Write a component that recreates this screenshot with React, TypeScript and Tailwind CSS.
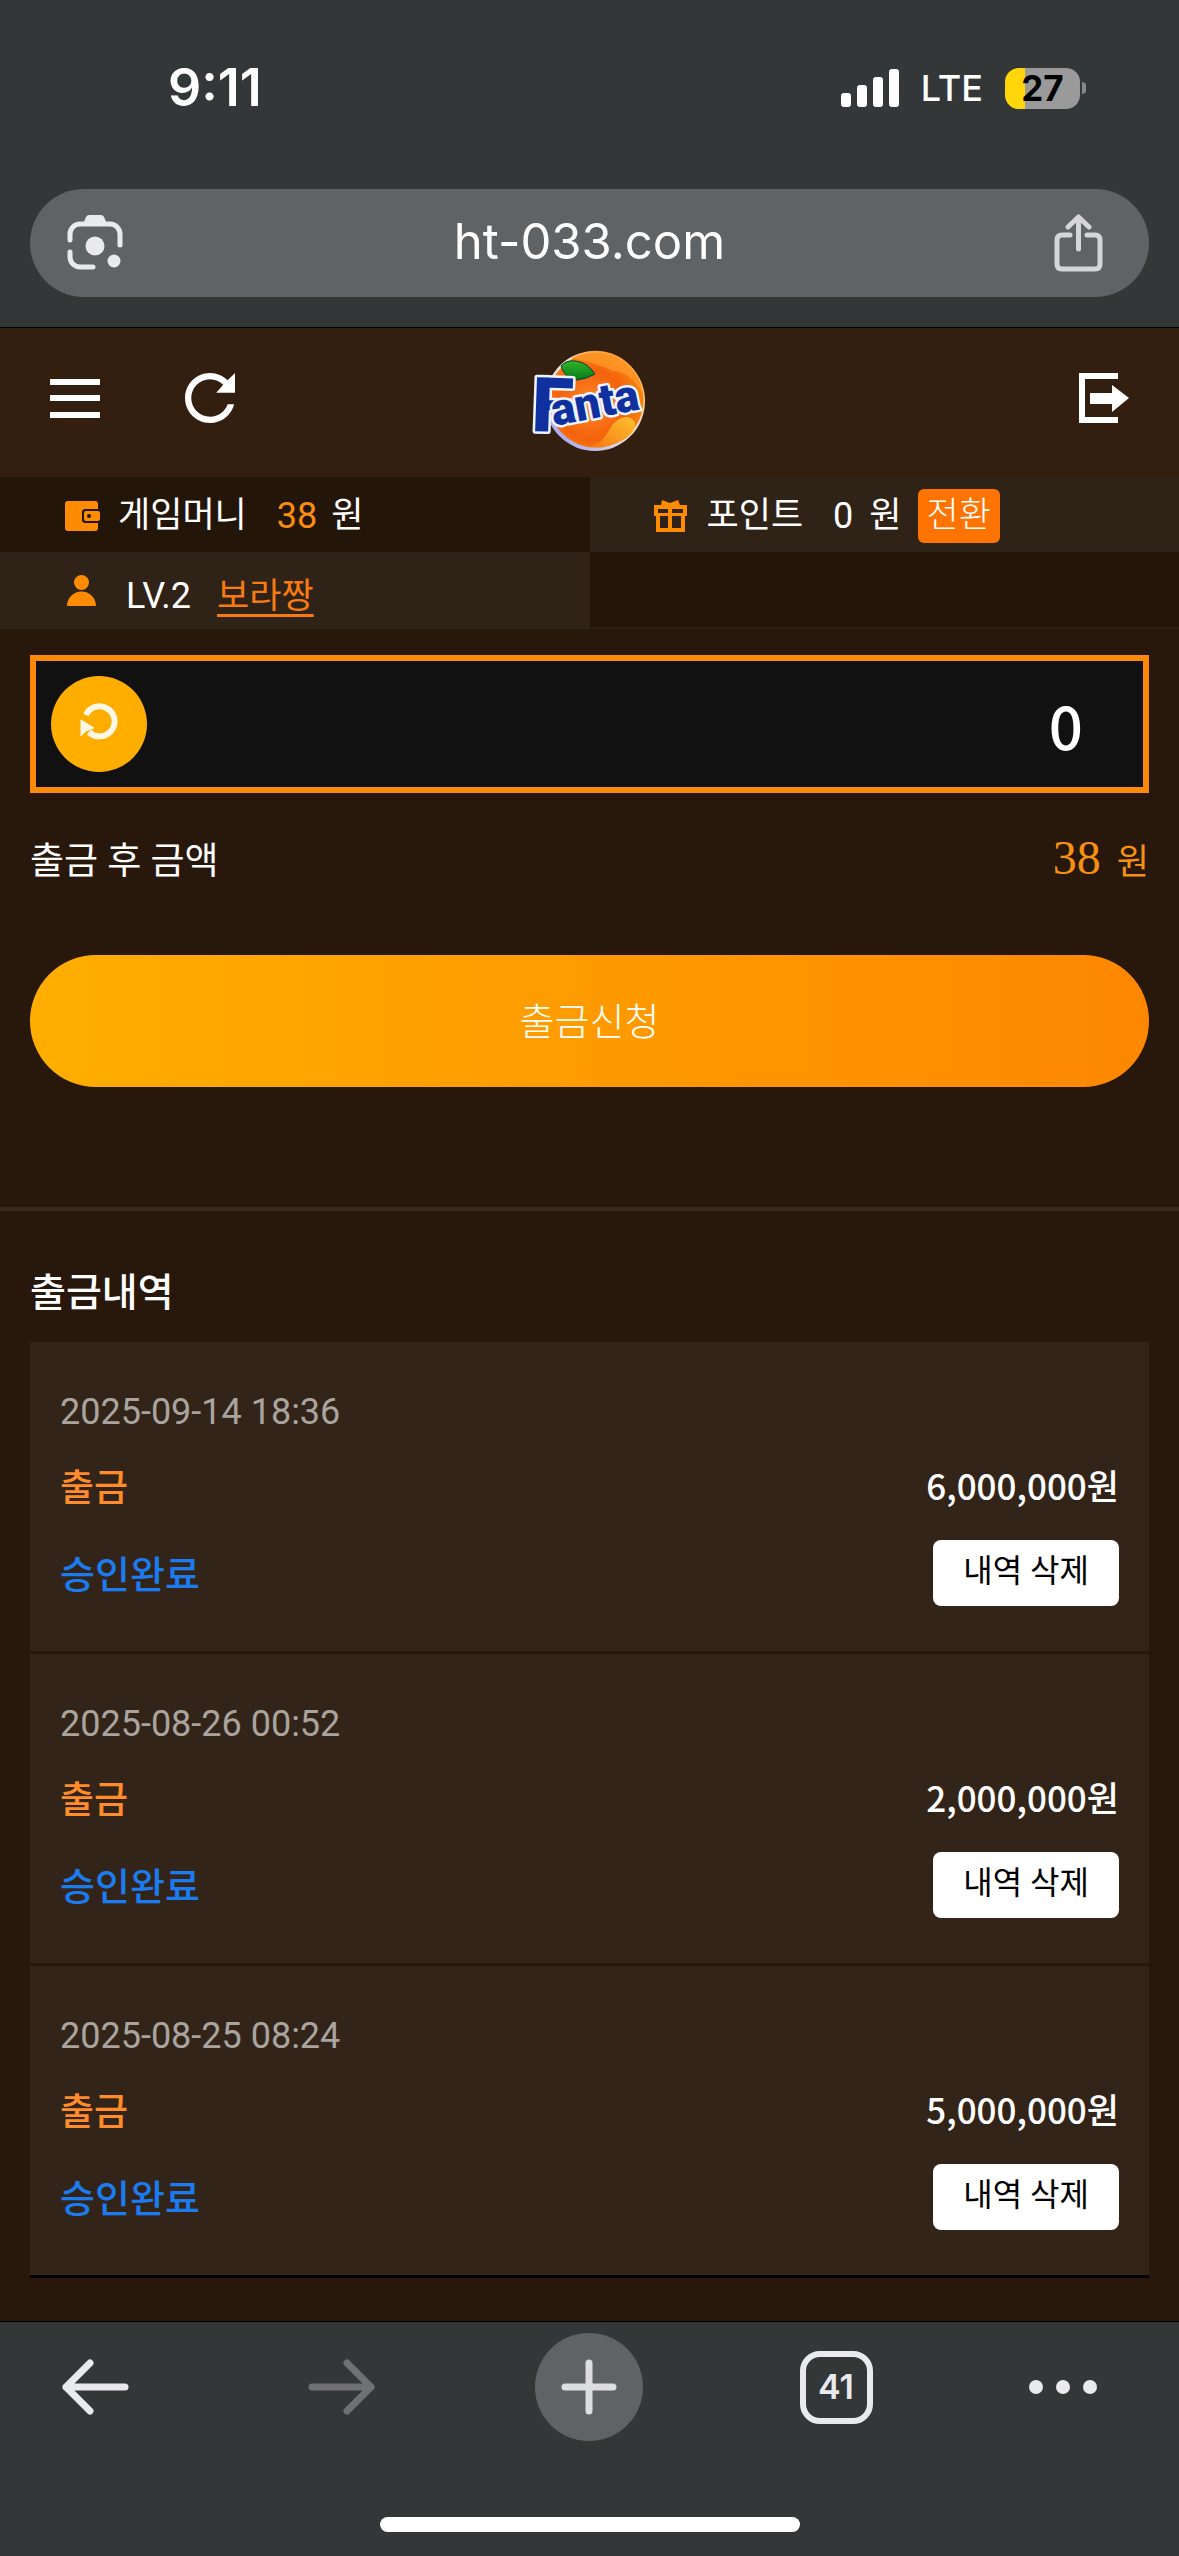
import React, { useState } from 'react';

interface Withdrawal {
  id: number;
  date: string;
  amount: string;
}

const WITHDRAWALS: Withdrawal[] = [
  { id: 1, date: '2025-09-14 18:36', amount: '6,000,000원' },
  { id: 2, date: '2025-08-26 00:52', amount: '2,000,000원' },
  { id: 3, date: '2025-08-25 08:24', amount: '5,000,000원' },
];

function StatusBar() {
  return (
    <div className="flex items-center justify-between pt-16 pl-[168px] pr-[93px] text-white">
      <span className="text-[52px] leading-12 font-semibold">9:11</span>
      <div className="flex items-center">
        <svg className="w-[58px] h-[38px]" viewBox="0 0 58 38" fill="currentColor">
          <rect x="0" y="24" width="10" height="14" rx="3" />
          <rect x="16" y="16" width="10" height="22" rx="3" />
          <rect x="32" y="8" width="10" height="30" rx="3" />
          <rect x="48" y="0" width="10" height="38" rx="3" />
        </svg>
        <span className="ml-[22px] text-[36px] leading-12 font-medium">LTE</span>
        <div className="ml-[22px] flex h-[41px] w-[75px] items-center justify-center rounded-[14px] bg-linear-to-r from-[#ffd60a] from-27% to-[#9a9a9b] to-27% text-[35px] leading-10 font-bold text-black">
          27
        </div>
        <div className="ml-0.5 h-3 w-1 rounded-r-full bg-[#87898a]" />
      </div>
    </div>
  );
}

function AddressBar() {
  return (
    <div className="mx-[30px] mt-[77px] mb-[30px] grid h-[108px] grid-cols-[1fr_auto_1fr] items-center rounded-full bg-[#5f6366] px-[37px] text-[#e8eaed]">
      <button type="button" aria-label="렌즈" className="justify-self-start">
        <svg className="size-14" viewBox="0 0 56 56" fill="none" stroke="currentColor" strokeWidth="5" strokeLinecap="round">
          <path d="M3 25V19a10 10 0 0 1 10-10h30a10 10 0 0 1 10 10v11" />
          <path d="M3 37v5a10 10 0 0 0 10 10h13" />
          <path d="M16 9l3-7q1-2 3-2h12q2 0 3 2l3 7z" fill="currentColor" stroke="none" />
          <circle cx="28" cy="31" r="9.5" fill="currentColor" stroke="none" />
          <circle cx="47" cy="46" r="6.5" fill="currentColor" stroke="none" />
        </svg>
      </button>
      <button type="button" className="pb-0.5 text-[49px] leading-14 text-white">
        ht-033.com
      </button>
      <button type="button" aria-label="공유" className="mr-[9px] justify-self-end">
        <svg className="h-[58px] w-[49px]" viewBox="0 0 49 58" fill="none" stroke="#d4d6d9" strokeWidth="5" strokeLinecap="round" strokeLinejoin="round">
          <path d="M16 21H8q-5 0-5 5v24q0 5 5 5h33q5 0 5-5V26q0-5-5-5h-8" />
          <path d="M24.500 35V4M14 13L24.500 3 35 13" />
        </svg>
      </button>
    </div>
  );
}

function Logo() {
  return (
    <svg className="h-[106px] w-[118px] overflow-visible" viewBox="31 14 118 106" role="img" aria-label="Fanta">
      <defs>
        <radialGradient id="fruit" cx="0.45" cy="0.55" r="0.6">
          <stop offset="0" stopColor="#ff8a2a" />
          <stop offset="0.6" stopColor="#f4620c" />
          <stop offset="1" stopColor="#f98a10" />
        </radialGradient>
        <linearGradient id="rim" x1="0" y1="1" x2="1" y2="0">
          <stop offset="0" stopColor="#8f97f0" />
          <stop offset="0.5" stopColor="#f3e4e0" />
          <stop offset="1" stopColor="#ffc04a" />
        </linearGradient>
        <linearGradient id="leaf" x1="0" y1="0" x2="0" y2="1">
          <stop offset="0" stopColor="#2fb52b" />
          <stop offset="1" stopColor="#087a1a" />
        </linearGradient>
        <linearGradient id="slice" x1="1" y1="0" x2="0" y2="1">
          <stop offset="0" stopColor="#ffc02e" />
          <stop offset="1" stopColor="#f77a14" />
        </linearGradient>
      </defs>
      <circle cx="96" cy="70" r="50" fill="url(#rim)" />
      <circle cx="97" cy="69" r="47.500" fill="url(#fruit)" />
      <path d="M72 27a47 47 0 0 1 72 36q-12-22-30-23-20-9-42-13z" fill="#ff9d2e" opacity="0.700" />
      <path d="M91 116q13-4 19-17 7-13 18-13 11 2 7 13-11 17-44 17z" fill="url(#slice)" />
      <path d="M62 35q5-6 14-5 12 1 20 13-8 5-18 6-13-2-16-14z" fill="url(#leaf)" stroke="#0b3a3a" strokeWidth="1" />
      <g
        fill="#10309f"
        stroke="#eef4ff"
        strokeWidth="5"
        strokeLinejoin="round"
        paintOrder="stroke"
        fontFamily="Roboto, sans-serif"
        fontWeight="900"
      >
        <text x="32" y="100" fontSize="76" transform="rotate(2 32 100)">
          F
        </text>
        <text x="55" y="95" fontSize="45" transform="rotate(-11 55 95)">
          anta
        </text>
      </g>
    </svg>
  );
}

function SiteHeader() {
  return (
    <header className="grid grid-cols-3 items-center bg-[#321f10] px-[50px] pt-[17px] pb-[26px] text-white">
      <div className="flex items-center gap-[85px]">
        <button type="button" aria-label="메뉴">
          <svg className="size-[50px]" viewBox="0 0 50 50" fill="currentColor">
            <path d="M0 6h50v6H0zM0 22h50v6H0zM0 39h50v6H0z" />
          </svg>
        </button>
        <button type="button" aria-label="새로고침">
          <svg className="size-[50px]" viewBox="4 4 16 16" fill="currentColor">
            <path d="M17.650 6.350C16.200 4.900 14.210 4 12 4c-4.420 0-7.990 3.580-7.990 8s3.570 8 7.990 8c3.730 0 6.840-2.550 7.730-6h-2.080c-.82 2.330-3.040 4-5.650 4-3.310 0-6-2.690-6-6s2.690-6 6-6c1.660 0 3.140.69 4.220 1.780L14 10.300h6V4l-2.350 2.350z" />
          </svg>
        </button>
      </div>
      <a href="#" className="justify-self-center">
        <Logo />
      </a>
      <button type="button" aria-label="로그아웃" className="justify-self-end">
        <svg className="size-[50px]" viewBox="0 0 50 50" fill="currentColor">
          <path d="M0 0h39v6H6v38h33v6H0z" />
          <path d="M11 20h22v-8l17 13-17 14v-8H11z" />
        </svg>
      </button>
    </header>
  );
}

function InfoGrid() {
  return (
    <section className="grid grid-cols-2 grid-rows-[75px_77px] text-[35px] leading-12 text-white">
      <div className="flex items-center bg-[#231609] pt-0.5 pl-[65px]">
        <svg className="h-[30px] w-[35px]" viewBox="0 0 35 30">
          <path d="M3 0h27q3 0 3 3v24q0 3-3 3H3q-3 0-3-3V3q0-3 3-3z" fill="#ff8c00" />
          <rect x="17" y="8" width="19" height="14" rx="3" fill="#231609" />
          <rect x="19" y="10" width="16" height="10" rx="2" fill="#ff8c00" />
          <circle cx="24" cy="15" r="2" fill="#231609" />
        </svg>
        <span className="ml-[18px]">게임머니</span>
        <span className="ml-[30px] text-[36px] text-[#f98d10]">38</span>
        <span className="ml-3.5">원</span>
      </div>
      <div className="flex items-center bg-[#2f2216] pt-0.5 pl-16">
        <svg className="h-[32px] w-[33px]" viewBox="0 0 33 32" fill="#ff8c00" fillRule="evenodd">
          <path d="M8 0l8 3 8-3 2 5h7v11h-2v16H2V16H0V5h7zM4 9v4h10V9zM18 9v4h11V9zM6 16v12h8V16zM18 16v12h9V16z" />
        </svg>
        <span className="ml-5">포인트</span>
        <span className="ml-[30px] text-[36px]">0</span>
        <span className="ml-4">원</span>
        <button type="button" className="ml-4 h-[54px] rounded-md bg-[#ff7300] px-[9px] font-light">
          전환
        </button>
      </div>
      <div className="flex items-center bg-[#2f2216] pl-[67px]">
        <svg className="h-[32px] w-[29px]" viewBox="0 0 29 32" fill="#ff8c00">
          <circle cx="14.500" cy="7.500" r="7.500" />
          <path d="M0 31a14.500 14.500 0 0 1 29 0z" />
        </svg>
        <span className="ml-[30px] pt-2.5 text-[36px]">LV.2</span>
        <a href="#" className="ml-[26px] pt-3 text-[#f77a12] underline decoration-3 underline-offset-6">
          보라짱
        </a>
      </div>
      <div className="border-b-2 border-[#2f1e0d] bg-[#231609]" />
    </section>
  );
}

function WithdrawForm() {
  const [amount, setAmount] = useState('0');

  return (
    <form onSubmit={(e) => e.preventDefault()} className="px-[30px] pt-[26px] pb-[120px]">
      <div className="flex h-[138px] items-center border-6 border-[#fc8a06] bg-[#111] pl-[15px] pr-[60px]">
        <button
          type="button"
          onClick={() => setAmount('0')}
          aria-label="금액 초기화"
          className="flex size-24 shrink-0 items-center justify-center rounded-full bg-[#ffae00]"
        >
          <svg className="mb-1.5 size-10" viewBox="0 0 40 40" fill="none" stroke="#fff7e6" strokeWidth="6">
            <path d="M7 14a15 15 0 1 1 3 17" />
            <path d="M2 19l13 8-8 3-5 5z" fill="#fff7e6" stroke="#fff7e6" strokeWidth="1" />
          </svg>
        </button>
        <input
          type="text"
          value={amount}
          onChange={(e) => setAmount(e.target.value)}
          aria-label="출금 금액"
          className="min-w-0 flex-1 bg-transparent text-right font-['Noto_Sans_CJK_KR',sans-serif] text-[60px] leading-20 font-medium text-white outline-none"
        />
      </div>
      <div className="mt-[43px] flex h-12 items-center justify-between leading-12">
        <span className="pt-1 text-[37px] text-white">출금 후 금액</span>
        <span className="flex items-baseline gap-4 text-[#f6910f]">
          <span className="font-['Liberation_Serif',serif] text-[48px]">38</span>
          <span className="text-[35px]">원</span>
        </span>
      </div>
      <button
        type="submit"
        className="mt-[71px] h-[132px] w-full rounded-full bg-linear-to-r from-[#ffae00] to-[#fd8700] pt-0.5 text-[38px] font-light text-white"
      >
        출금신청
      </button>
    </form>
  );
}

function History() {
  const [items, setItems] = useState<Withdrawal[]>(WITHDRAWALS);

  return (
    <section className="border-t-4 border-[#38281d] px-[30px] pt-14 pb-[43px]">
      <h2 className="text-[39px] leading-13 font-medium text-white">출금내역</h2>
      <ul className="mt-[23px]">
        {items.map((item) => (
          <li
            key={item.id}
            className="border-b-3 border-[#26170b] bg-[#332419] px-[30px] pt-12 pb-[45px] last:border-black"
          >
            <p className="text-[36px] leading-11 text-[#aaa49f]">{item.date}</p>
            <div className="mt-[30px] flex items-center justify-between font-medium">
              <span className="pt-1 text-[37px] leading-[42px] text-[#ff8c28]">출금</span>
              <span className="pb-1 font-['Noto_Sans_CJK_KR',sans-serif] text-[35px] leading-[42px] text-white">
                {item.amount}
              </span>
            </div>
            <div className="mt-[30px] flex items-center justify-between">
              <span className="pt-1 text-[38px] leading-[46px] font-medium text-[#1b7cf0]">승인완료</span>
              <button
                type="button"
                onClick={() => setItems(items.filter((i) => i.id !== item.id))}
                className="h-[66px] rounded-lg bg-white px-[30px] pb-1 text-[32px] text-black"
              >
                내역 삭제
              </button>
            </div>
          </li>
        ))}
      </ul>
    </section>
  );
}

function BrowserToolbar() {
  return (
    <footer className="border-t border-black bg-[#343738] pt-[11px] pb-6 font-['Inter',sans-serif] text-[#e8eaed]">
      <nav className="flex items-center justify-between pl-[41px] pr-[42px]">
        <button type="button" aria-label="뒤로" className="flex w-[108px] justify-center">
          <svg className="h-14 w-[68px]" viewBox="0 0 68 56" fill="none" stroke="currentColor" strokeWidth="7" strokeLinecap="round" strokeLinejoin="round">
            <path d="M64 28H5M29 4L5 28l24 24" />
          </svg>
        </button>
        <button type="button" aria-label="앞으로" className="flex w-[108px] justify-center text-[#6f7172]">
          <svg className="h-14 w-[68px]" viewBox="0 0 68 56" fill="none" stroke="currentColor" strokeWidth="7" strokeLinecap="round" strokeLinejoin="round">
            <path d="M4 28h59M39 4l24 24-24 24" />
          </svg>
        </button>
        <button
          type="button"
          aria-label="새 탭"
          className="flex size-[108px] items-center justify-center rounded-full bg-[#5f6366]"
        >
          <svg className="size-14" viewBox="0 0 56 56" fill="none" stroke="#dcdee1" strokeWidth="7" strokeLinecap="round">
            <path d="M28 4v48M4 28h48" />
          </svg>
        </button>
        <button type="button" className="flex w-[108px] justify-center">
          <span className="flex size-[73px] items-center justify-center rounded-[20px] border-6 border-[#e8eaed] text-[34px] leading-10 font-semibold">
            41
          </span>
        </button>
        <button type="button" aria-label="더보기" className="flex w-[108px]">
          <svg className="h-[14px] w-[68px]" viewBox="0 0 68 14" fill="currentColor">
            <circle cx="7" cy="7" r="7" />
            <circle cx="34" cy="7" r="7" />
            <circle cx="61" cy="7" r="7" />
          </svg>
        </button>
      </nav>
      <div className="mx-auto mt-19 h-[15px] w-[420px] rounded-full bg-white" />
    </footer>
  );
}

export default function App() {
  return (
    <div className="flex min-h-screen flex-col bg-[#28180c] font-['Roboto','Noto_Sans_CJK_KR',sans-serif]">
      <div className="border-b border-black bg-[#343738] font-['Inter',sans-serif]">
        <StatusBar />
        <AddressBar />
      </div>
      <SiteHeader />
      <main className="flex-1">
        <InfoGrid />
        <WithdrawForm />
        <History />
      </main>
      <BrowserToolbar />
    </div>
  );
}
